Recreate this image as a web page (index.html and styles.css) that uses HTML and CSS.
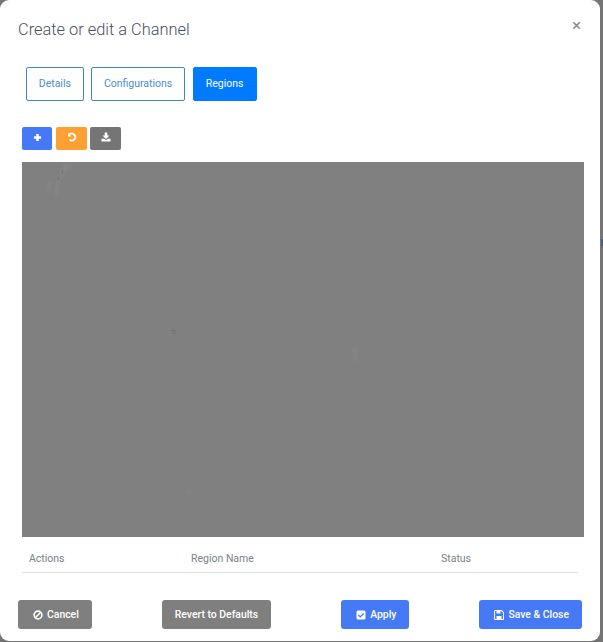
FILE: index.html
```html
<!DOCTYPE html>
<html lang="en">
<head>
  <meta charset="UTF-8">
  <meta name="viewport" content="width=device-width, initial-scale=1.0">
  <title>Create or edit a Channel</title>
  <link rel="stylesheet" href="styles.css">
</head>
<body>
  <span class="backdrop-mark"></span>
  <div class="modal">
    <div class="modal-header">
      <h1>Create or edit a Channel</h1>
      <span class="close">&times;</span>
    </div>
    <div class="tabs">
      <a class="tab">Details</a>
      <a class="tab">Configurations</a>
      <a class="tab active">Regions</a>
    </div>
    <div class="toolbar">
      <button class="tool blue">
        <svg viewBox="0 0 10 10" width="9" height="9"><path d="M3.6 1h2.8v2.6H9v2.8H6.4V9H3.6V6.4H1V3.6h2.6z" fill="#fff"/></svg>
      </button>
      <button class="tool orange">
        <svg viewBox="0 0 10 10" width="10" height="10"><path d="M2.4 2.6A3.4 3.4 0 1 1 2.6 7.6" fill="none" stroke="#fff" stroke-width="1.8"/><path d="M1 1v3.4h3.400z" fill="#fff"/></svg>
      </button>
      <button class="tool gray">
        <svg viewBox="0 0 10 10" width="10" height="10"><path d="M3.700 0.500h2.600v3h2.200L5 7 1.500 3.500h2.200zM0.500 6.800h2.700l1 1h1.600l1-1h2.700v2.700h-9z" fill="#fff"/></svg>
      </button>
    </div>
    <div class="canvas">
      <svg class="specks" viewBox="0 0 562 375" width="562" height="375">
        <g class="smudge">
          <path d="M44 2l-3 7-2 7M37 17l-2 9-1 6M28 20l-1 9M50 3l-8 5" fill="none" stroke="#898989" stroke-width="2.500"/>
          <path d="M333 186v13" fill="none" stroke="#858585" stroke-width="5"/>
          <path d="M167 327v6" fill="none" stroke="#848484" stroke-width="3"/>
        </g>
        <path d="M41 8l-1 4M37 15l-1 3" fill="none" stroke="#6e6e6e" stroke-width="1"/>
        <path d="M149 168l5 1M150 171h4" fill="none" stroke="#707070" stroke-width="1"/>
      </svg>
    </div>
    <table class="regions">
      <thead>
        <tr>
          <th class="col-actions">Actions</th>
          <th class="col-name">Region Name</th>
          <th>Status</th>
        </tr>
      </thead>
    </table>
    <div class="modal-footer">
      <button class="btn gray icon-btn">
        <svg viewBox="0 0 10 10" width="10" height="10"><circle cx="5" cy="5" r="3.900" fill="none" stroke="#fff" stroke-width="1.600"/><path d="M2.500 7.500l5-5" stroke="#fff" stroke-width="1.600"/></svg>
        Cancel
      </button>
      <button class="btn gray">Revert to Defaults</button>
      <button class="btn blue icon-btn">
        <svg viewBox="0 0 10 10" width="10" height="10"><rect x="0.500" y="0.500" width="9" height="9" rx="1.500" fill="#fff"/><path d="M2.400 5l1.900 1.900 3.300-3.400" fill="none" stroke="#4579f5" stroke-width="1.300"/></svg>
        Apply
      </button>
      <button class="btn blue icon-btn">
        <svg viewBox="0 0 10 10" width="10" height="10"><path d="M1.500 0.500h6l2 2v6a1 1 0 0 1-1 1h-7a1 1 0 0 1-1-1v-7a1 1 0 0 1 1-1z" fill="none" stroke="#fff" stroke-width="1.100"/><path d="M2.500 1h4v2.500h-4zM2.500 6h5v3h-5z" fill="#fff"/></svg>
        Save &amp; Close
      </button>
    </div>
  </div>
</body>
</html>
```
FILE: styles.css
```css
html, body {
  height: 100%;
  margin: 0;
  padding: 0;
}
body {
  background: #757575;
  font-family: 'Roboto', 'Liberation Sans', sans-serif;
  overflow: hidden;
}
.backdrop-mark {
  position: absolute;
  left: 601px;
  top: 239px;
  width: 2px;
  height: 7px;
  background: #4a5f85;
}
.modal {
  width: 600px;
  height: 641px;
  box-sizing: border-box;
  background: #fff;
  border-radius: 9px;
  padding: 0 18px;
  display: flex;
  flex-direction: column;
}
.modal-header {
  display: flex;
  justify-content: space-between;
  align-items: center;
  height: 58px;
}
h1 {
  margin: 0;
  font-size: 16.4px;
  font-weight: 300;
  color: #46505f;
}
.close {
  position: relative;
  top: -4px;
  margin-right: 1px;
  color: #888;
  font-size: 17px;
  line-height: 17px;
}
.tabs {
  display: flex;
  gap: 7.5px;
  margin: 9px 0 0 8px;
}
.tab {
  box-sizing: border-box;
  height: 34px;
  padding: 0 11.75px;
  border: 1px solid #3f87c9;
  border-radius: 2px;
  font-size: 10.5px;
  line-height: 31px;
  color: #4a8ed0;
}
.tab.active {
  padding: 0 12.25px;
  background: #007bff;
  border-color: #007bff;
  color: #fff;
}
.toolbar {
  display: flex;
  gap: 4px;
  margin: 26px 0 0 4px;
}
.tool {
  width: 30px;
  height: 23px;
  padding: 0 0 3px;
  border: 0;
  border-radius: 2px;
  display: flex;
  align-items: center;
  justify-content: center;
}
.tool.blue {
  background: #4579f5;
}
.tool.orange {
  width: 31px;
  margin-right: -1px;
  background: #ffa033;
}
.tool.gray {
  width: 31px;
  background: #757575;
}
.canvas {
  width: 562px;
  height: 375px;
  margin: 12px 0 0 4px;
  background: #808080;
}
.specks {
  display: block;
}
.smudge {
  filter: blur(1.5px);
}
.regions {
  width: 556px;
  margin-left: 4px;
  border-collapse: collapse;
  table-layout: fixed;
}
.regions th {
  height: 28px;
  padding: 7px 0 0 7px;
  border-bottom: 1px solid #dee2e6;
  font-size: 10.5px;
  font-weight: 400;
  color: #78818d;
  text-align: left;
}
.col-actions {
  width: 155px;
}
.col-name {
  width: 243px;
}
.modal-footer {
  display: flex;
  justify-content: space-between;
  margin-top: 27px;
}
.btn {
  height: 29px;
  padding: 0 13px;
  border: 0;
  border-radius: 3px;
  display: flex;
  align-items: center;
  gap: 4px;
  font-family: inherit;
  font-size: 10.4px;
  font-weight: 500;
  color: #fff;
}
.btn.icon-btn {
  padding-left: 15px;
}
.btn.gray {
  background: #7f7f7f;
}
.btn.blue {
  background: #4579f5;
}
```
